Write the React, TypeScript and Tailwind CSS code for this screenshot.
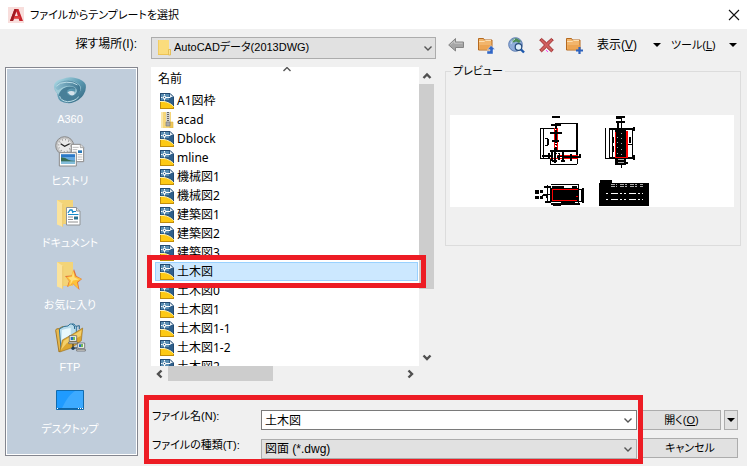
import type { ReactNode } from 'react'

const uiFont = "font-['Liberation_Sans','Noto_Sans_CJK_JP',sans-serif]"
const listFont = "font-['Noto_Sans','Noto_Sans_CJK_JP',sans-serif]"

type FileItem = { name: string; kind: 'dwg' | 'zip' }

const files: FileItem[] = [
  { name: 'A1図枠', kind: 'dwg' },
  { name: 'acad', kind: 'zip' },
  { name: 'Dblock', kind: 'dwg' },
  { name: 'mline', kind: 'dwg' },
  { name: '機械図1', kind: 'dwg' },
  { name: '機械図2', kind: 'dwg' },
  { name: '建築図1', kind: 'dwg' },
  { name: '建築図2', kind: 'dwg' },
  { name: '建築図3', kind: 'dwg' },
  { name: '土木図', kind: 'dwg' },
  { name: '土木図0', kind: 'dwg' },
  { name: '土木図1', kind: 'dwg' },
  { name: '土木図1-1', kind: 'dwg' },
  { name: '土木図1-2', kind: 'dwg' },
  { name: '土木図2', kind: 'dwg' },
]

function AppLogo() {
  return (
    <svg width="16" height="16" viewBox="0 0 16 16" aria-hidden="true">
      <rect width="16" height="16" fill="#f8dedc" />
      <path d="M2 14 6.500 2h4L15 14h-3.600l-.8-2.600H6.200L5 14z" fill="#c8232c" />
      <path d="M6.800 9h3L8.500 4.600z" fill="#f8dedc" />
      <path d="M2 14 6.500 2h2L5 14z" fill="#9e1b22" />
      <path d="m5.500 11.400 1-2.200 5 0 .8 2.200z" fill="#e0413f" />
    </svg>
  )
}

function Chevron({ dir, bold = false }: { dir: 'up' | 'down' | 'left' | 'right'; bold?: boolean }) {
  const d = {
    up: 'M1.500 7 5 3.500 8.500 7',
    down: 'M1.500 3.500 5 7l3.500-3.500',
    left: 'M6.500 1.500 3 5l3.500 3.500',
    right: 'M3.500 1.500 7 5 3.500 8.500',
  }[dir]
  return (
    <svg width="10" height="10" viewBox="0 0 10 10" fill="none" stroke={bold ? '#505050' : '#555'} strokeWidth={bold ? 2.4 : 1.4} aria-hidden="true">
      <path d={d} />
    </svg>
  )
}

function Triangle() {
  return (
    <svg width="8" height="4" viewBox="0 0 8 4" aria-hidden="true">
      <path d="M0 0h8L4 4z" fill="#000" />
    </svg>
  )
}

function FolderBack() {
  return (
    <>
      <path d="M0 0h16v24H0z" fill="#efcb68" />
      <path d="M0 0h16v22L6 24z" fill="#f3d478" />
      <path d="M0 0 6 4v23L0 24.500z" fill="#fbe39c" />
      <path d="M5.500 4v23l.6-.4V4.300z" fill="#e3b951" />
    </>
  )
}

function DwgIcon() {
  return (
    <svg width="14" height="16" viewBox="0 0 14 16" aria-hidden="true">
      <path d="M0 0h10l4 4v12H0z" fill="#2f5f8b" />
      <path d="M1 1h8v6H1z" fill="#5b8fb4" />
      <path d="M10 0 14 4h-4z" fill="#e9f0f5" />
      <path d="M1 8c6-1 10 1 13 5v1L1 11z" fill="#244f79" />
      <path d="M0 8.500h4c4 .5 7 2.500 10 5V16H0z" fill="#fdc914" />
      <path d="M0 8.500h4c4 .5 7 2.500 10 5" stroke="#fff3b8" fill="none" />
      <path d="M0 15.500h14M.5 9v7M13.500 14v2" stroke="#c08c0a" />
      <path d="M4.500 1v1.500M4.500 6v1.500M1 4.500h1.500M6 4.500h4.500" stroke="#fff" />
      <path d="M3.500 3.500h2v2h-2z" fill="#2f5f8b" stroke="#fff" strokeWidth=".9" />
      <path d="M.5 8V.5H10l3.500 3.500v9" stroke="#234a70" fill="none" />
    </svg>
  )
}

function ZipIcon() {
  return (
    <svg width="14" height="16" viewBox="0 0 14 16" aria-hidden="true">
      <path d="M1 0h10v11h2v5H1z" fill="#f5d67b" />
      <path d="M1 0h2v16H1z" fill="#fbe7a8" />
      <path d="M10 10h3v6h-3z" fill="#f0c859" stroke="#dcb140" strokeWidth=".6" />
      <path d="M6 0h4v12H6z" fill="#d4d4ce" />
      <path d="M8 0v11" stroke="#666" strokeWidth="2" strokeDasharray="1 1" />
      <path d="M6 10h4v4H6z" fill="#aaa" stroke="#777" strokeWidth=".6" />
    </svg>
  )
}

function SmallFolder() {
  return (
    <svg width="13" height="16" viewBox="0 0 13 16" aria-hidden="true">
      <path d="M0 0h11v9h2v6H0z" fill="#fbdc7c" />
      <path d="M0 0h1v15H0z" fill="#f3cd62" />
      <path d="M10.500 9.500h2v5.500h-2z" fill="#fbe294" stroke="#dfb64d" strokeWidth=".8" />
      <path d="M0 14.500h10" stroke="#eec455" />
    </svg>
  )
}

function A360Icon() {
  return (
    <svg width="32" height="27" viewBox="165 47 97 80" aria-hidden="true">
      <defs>
        <linearGradient id="swirlA" x1="0" y1="0" x2="1" y2="1">
          <stop offset="0" stopColor="#b9e3ec" />
          <stop offset=".5" stopColor="#5c9ab2" />
          <stop offset="1" stopColor="#2d5f79" />
        </linearGradient>
        <linearGradient id="swirlB" x1="0" y1="0" x2="1" y2="0">
          <stop offset="0" stopColor="#8fc0d2" />
          <stop offset="1" stopColor="#3c7590" />
        </linearGradient>
      </defs>
      <path d="M190 52q20-8 40-3 24 5 31 20 3 18-7 32-10 16-36 24-22 2-34-6-6-5-8-14l-2-10q-12-10-8-28 6-12 24-15z" fill="url(#swirlA)" />
      <path d="M188 62q28-10 48 2 14 10 10 22-6 12-26 15l8-8q6-10-6-14-14-5-28 2-12 8-16 18-14-12-8-24 5-9 18-13z" fill="#9fcbd8" />
      <path d="M186 60q30-9 48 4 18 13 8 28-8 12-28 14 18-6 20-16 2-14-18-17-20-1-36 12-8 2-11-6 3-13 17-19z" fill="url(#swirlB)" />
      <path d="M179 105q2-22 26-29 20-4 28 9-16-9-27 1-6 9 4 16 12 5 26-3-10 18-32 20-17 0-25-14z" fill="#487f98" />
      <path d="M206 92q10-6 22-1l-2 9q-6 4-13 0z" fill="#d6e3eb" />
      <path d="M182 104q3 14 24 17 22-1 34-15M172 74q10-12 30-12 22-1 34 8" fill="none" stroke="#bcdde7" strokeWidth="3" />
    </svg>
  )
}

function HistoryIcon() {
  return (
    <svg width="30" height="32" viewBox="168 227 90 96" aria-hidden="true">
      <circle cx="197" cy="256" r="27" fill="#c4c4c4" stroke="#8b8b8b" strokeWidth="3" />
      <circle cx="197" cy="256" r="21" fill="#e9e9e9" />
      <circle cx="197" cy="256" r="18" fill="none" stroke="#777" strokeWidth="4" strokeDasharray="2 7.400" />
      <path d="m185 250 12 8 15-8" fill="none" stroke="#222" strokeWidth="3.500" />
      <path d="M217 252h28l9 9v43h-37z" fill="#fff" stroke="#8a8a8a" strokeWidth="3" />
      <path d="M244 252v10h10" fill="#ddd" stroke="#8a8a8a" strokeWidth="2" />
      <path d="M221 261h18M221 268h14M221 275h12M236 283h14M236 290h14M236 297h14" stroke="#999" strokeWidth="2" />
      <path d="M237 270h12v8h-12z" fill="#2878b8" />
      <path d="M181 277h51v40h-51z" fill="#fff" stroke="#8a8a8a" strokeWidth="3" />
      <path d="M186 282h42v29h-42z" fill="#67a9df" />
      <path d="M186 282h42v8h-42z" fill="#2c79c8" />
      <path d="M186 291q14 1 22 7 10 4 20 3v5h-42z" fill="#386d55" />
      <path d="M186 303h42v8h-42z" fill="#83bdda" />
    </svg>
  )
}

function DocumentIcon() {
  return (
    <svg width="26" height="28" viewBox="0 0 26 28" aria-hidden="true">
      <FolderBack />
      <path d="M9.500 7.500h10l3.500 3.500v14H9.500z" fill="#fff" stroke="#8f9396" />
      <path d="M19.500 7.500V11H23" fill="#ddd" stroke="#8f9396" />
      <path d="m11 13 2-3h2l1 3" stroke="#168ac9" fill="none" strokeWidth="1.300" />
      <path d="M16 11.500h3M11 14.500h10.500" stroke="#168ac9" />
      <path d="M11 17h5M11 19.500h5M11 22h10" stroke="#909090" />
      <path d="M17 16.500h4v3h-4z" fill="#2b718e" />
    </svg>
  )
}

function FavoriteIcon() {
  return (
    <svg width="26" height="28" viewBox="0 0 26 28" aria-hidden="true">
      <FolderBack />
      <path d="m17 7 2.500 7 5.500 3-4 3.500L22.500 28 16 22l-6 3 2-6-4-5 6.500-.5z" fill="#e0713b" />
      <path d="m16 8 2.500 6.500 6 2.500-4.500 3 1.500 7L16 21.500 11 25l1.500-6L9 15l5.500-1z" fill="#fdc23a" />
      <path d="m16 9 1.500 6.500 4.500 2-6 1-3 4.500 1-4.500-3-3 4-.5z" fill="#ffe07c" />
    </svg>
  )
}

function FtpIcon() {
  return (
    <svg width="31" height="30" viewBox="167 17 93 90" aria-hidden="true">
      <path d="M169 39q0-6 10-5l10-6 10-1 3 55-23 22z" fill="#e8b94c" stroke="#a77a28" strokeWidth="3" />
      <path d="M180 35q14-10 26-9l6-6h12l7 9v40l-46 26z" fill="#b9dcec" stroke="#34789e" strokeWidth="3" />
      <path d="M188 38q12-5 26-6v28l-29 28z" fill="#e8f8fd" />
      <path d="M218 20q10 4 8 15M230 27l10-2v10" fill="none" stroke="#28658c" strokeWidth="3" />
      <path d="m181 104 8-36 32-18 29-18-4 38-30 22z" fill="#dda730" stroke="#9b7427" strokeWidth="2" />
      <path d="m185 98 8-28 54-32-3 18-42 22z" fill="#f3d06c" />
      <path d="M210 55h22v17h-22zM235 77h21v16h-21z" fill="#f1f3ed" stroke="#555" strokeWidth="2" />
      <path d="M214 59h13v9h-13zM239 81h12v8h-12z" fill="#286fc0" />
      <path d="M221 59h6v9h-6zM245 81h6v8h-6z" fill="#72bd52" />
      <path d="M208 74h26v5h-26zM232 96h26v5h-26z" fill="#e1e2dd" stroke="#555" strokeWidth="2" />
      <path d="M221 80v12h12" fill="none" stroke="#222" strokeWidth="3" />
      <circle cx="221" cy="93" r="5" fill="#1f3e59" />
    </svg>
  )
}

function DesktopIcon() {
  return (
    <svg width="28" height="20" viewBox="0 0 28 20" aria-hidden="true">
      <path d="M.5.5h27v19H.5z" fill="#1f9bff" stroke="#126bad" />
      <path d="M19 1h8v17H6C10 10 13 5 19 1z" fill="#3daaff" />
      <path d="M1 18.500h26" stroke="#0e65a6" />
      <path d="M1 18.500h1M22 18.500h1m1 0h1m1 0h1" stroke="#fff" />
    </svg>
  )
}

const places: { label: string; icon: ReactNode }[] = [
  { label: 'A360', icon: <A360Icon /> },
  { label: 'ヒストリ', icon: <HistoryIcon /> },
  { label: 'ドキュメント', icon: <DocumentIcon /> },
  { label: 'お気に入り', icon: <FavoriteIcon /> },
  { label: 'FTP', icon: <FtpIcon /> },
  { label: 'デスクトップ', icon: <DesktopIcon /> },
]

function OrangeFolder({ children }: { children: ReactNode }) {
  return (
    <svg width="17" height="17" viewBox="0 0 17 17" aria-hidden="true">
      <path d="M.5 1.500h5l1 1.500h7.500v10H.5z" fill="#f2b56b" stroke="#b5691f" />
      <path d="M1 4.500h5l1.500-1H13" fill="none" stroke="#fbe0b4" />
      <path d="M1.500 8h12v4.500h-12z" fill="#eda552" />
      {children}
    </svg>
  )
}

function Toolbar() {
  return (
    <div className="flex h-[30px] items-center pl-[3px] pt-[2px]">
      <button aria-label="戻る" className="mr-[14px]">
        <svg width="16" height="16" viewBox="0 0 16 16" aria-hidden="true">
          <path d="M.7 8 7.500 1.500V5h8v5.500h-8V14z" fill="#a6a6a6" stroke="#858585" />
          <path d="M2.500 7.500 6.500 4v2.200h8" fill="none" stroke="#c9c9c9" />
        </svg>
      </button>
      <button aria-label="1 つ上のフォルダへ" className="mr-[13px]">
        <OrangeFolder>
          <path d="M13 8.500 9.500 12.500H12v1.500H9V17h6v-4.500h2z" fill="#3166c5" stroke="#fff" strokeWidth=".4" />
        </OrangeFolder>
      </button>
      <button aria-label="Web を検索" className="mr-[14px]">
        <svg width="17" height="17" viewBox="0 0 17 17" aria-hidden="true">
          <circle cx="7.500" cy="7.500" r="6.800" fill="#8facd8" stroke="#5f7eb2" />
          <path d="M4 3q3-2.500 5-1.500l4 2.500-2 2-3-1.500-2 1-2-.5z" fill="#4d8d55" />
          <path d="M3 7q1-4 4-5" stroke="#c6def1" fill="none" />
          <circle cx="10.500" cy="10" r="3.300" fill="#dcedf9" stroke="#264b7c" strokeWidth="1.200" />
          <path d="m13 12.500 3 3" stroke="#1c58ac" strokeWidth="2.400" />
        </svg>
      </button>
      <button aria-label="削除" className="mr-[12px]">
        <svg width="15" height="16" viewBox="0 0 15 16" aria-hidden="true">
          <path d="m2.700 1.500 4.800 4.300L12.300 1.500l2 1.500-4.800 5 4.800 5-2 1.800-4.800-4.500-4.800 4.500-2-1.800 4.800-5L.7 3z" fill="#d0605e" stroke="#a02f31" />
          <path d="M7 13.500h1m0 1h1" stroke="#ff42ff" />
        </svg>
      </button>
      <button aria-label="新規フォルダを作成" className="mr-[14px]">
        <OrangeFolder>
          <path d="M13.500 10v7M10 13.500h7" stroke="#2d62bd" strokeWidth="2.200" />
        </OrangeFolder>
      </button>
      <button className="flex w-[74px] items-center justify-between pr-[10px]">
        <span>表示(<u>V</u>)</span>
        <Triangle />
      </button>
      <button className="flex w-[66px] items-center justify-between">
        <span className="text-[11px]">ツール(<u>L</u>)</span>
        <Triangle />
      </button>
    </div>
  )
}

function DrawingPreview() {
  return (
    <svg className="h-[92px] w-full bg-white" viewBox="0 0 284 92" role="img" aria-label="図面のプレビュー">
      <g transform="translate(70 -5) scale(.33333)" fill="none" stroke="#000" strokeWidth="3" shapeRendering="crispEdges">
        <path d="M96 18h24v6H96z" fill="#000" stroke="none" />
        <path d="M61.500 55.500h40M61.500 55v91h28M70.500 54v90M106 40.500h66M91.500 145v18.500h80v-24M76 86h9v20H76M82 84v22" />
        <path d="M171 40v104" strokeWidth="5" />
        <path d="M104 53v71M112 53v71" stroke="#f00" strokeWidth="5" />
        <path d="M84 145h90M112 137h62" stroke="#f00" strokeWidth="4" />
        <path d="M107 38v94" strokeWidth="6" strokeDasharray="18 4 10 3" />
        <path d="M93 46h30M89 68h36M96 94h22M90 123h84M66 137h32M112 141h70" strokeWidth="6" />
        <path d="M86 128v18M96 124v28M104 115v43M116 130v20M128 124v32M153 132v22M180 132v12M95 154h15M122 154h12" strokeWidth="6" />
        <path d="M105 102h6M105 111h6M110 134h6M119 143h6" stroke="#fff" />
        <path d="M288 18h26v6H302v3h-14zM288 33h27v6h-27z" fill="#000" stroke="none" />
        <path d="M304.500 20v154M256.500 54v91.500h30M268.500 56v90M278 59v84M339 60v80M325 104h14" />
        <path d="M268 57h76M267 144h76M282 82q-8 7 0 14M282 111q-8 7 0 14M331 82v18M342 50v14M342 136v14M284 160h40M294 36v20" strokeWidth="6" />
        <path d="M286 60h33v104h-33z" fill="#000" stroke="none" />
        <path d="M287 66v78M285 143h38" stroke="#f00" />
        <path d="M321 64v76" stroke="#f00" strokeWidth="6" />
        <path d="M304 68v76M294 80v64" stroke="#fff" strokeWidth="2" strokeDasharray="3 13" />
        <path d="M295 150h16M295 157h16" stroke="#fff" strokeWidth="2" />
        <path d="M45 240h12v11H45zM45 259h12v9H45zM60 240h8v8h-8zM60 258h8v8h-8z" fill="#000" stroke="none" />
        <path d="M92 223.500h85v61H92M75 231h18v46H78M82 226v53M65 257h13M178 238h13v36h-17M185 238v36M69 254h24" />
        <path d="M95 235h82v40H95z" fill="#000" />
        <path d="M97 239h76M97 237v36M97 271h75M168 260h6" stroke="#f00" />
        <path d="M95 231h38M157 231h15M92 281h32M100 286h22M124 278h40M166 282h13M81 252v12M189 235v44M72 230h18M76 276h16" strokeWidth="6" />
        <path d="M240 210h36v9h111v69H237v-69h3z" fill="#000" stroke="none" />
        <path d="M272 223h98M272 229h98" stroke="#fff" strokeWidth="2" strokeDasharray="12 3 5 9" />
        <path d="M258 250h112M258 268h112" stroke="#fff" strokeDasharray="7 9 20 7 4 7" />
      </g>
    </svg>
  )
}

function FileBrowser() {
  return (
    <div className="relative w-[283px]">
      <div className={`grid grid-cols-[1fr_15px] grid-rows-[299px_15px] ${listFont}`}>
        <div className="relative overflow-hidden bg-white pl-1 pr-px">
          <div className="flex h-6 items-center pl-[3px]">名前</div>
          <div className="absolute left-[131px] top-[-3px]"><Chevron dir="up" /></div>
          <ul>
            {files.map((f) => (
              <li key={f.name}>
                <button
                  className={`flex h-[19px] w-full items-center gap-[3px] border pl-1 text-left ${
                    f.name === '土木図' ? 'border-[#99d1ff] bg-[#cce8ff]' : 'border-transparent'
                  }`}
                >
                  {f.kind === 'dwg' ? <DwgIcon /> : <ZipIcon />}
                  {f.name}
                </button>
              </li>
            ))}
          </ul>
        </div>
        <div className="flex flex-col">
          <button aria-label="上へスクロール" className="flex h-[17px] items-center justify-center"><Chevron dir="up" bold /></button>
          <div className="h-[205px] bg-[#cdcdcd]" />
          <button aria-label="下へスクロール" className="mt-auto flex h-[18px] items-center justify-center"><Chevron dir="down" bold /></button>
        </div>
        <div className="flex">
          <button aria-label="左へスクロール" className="flex w-[17px] items-center justify-center"><Chevron dir="left" bold /></button>
          <div className="w-[105px] bg-[#cdcdcd]" />
          <button aria-label="右へスクロール" className="ml-auto flex w-[18px] items-center justify-center"><Chevron dir="right" bold /></button>
        </div>
      </div>
      <div className="pointer-events-none absolute left-[-4px] top-[188px] h-[33px] w-[279px] border-[5px] border-[#ed1c24]" />
    </div>
  )
}

export default function App() {
  return (
    <div className={`bg-[#f0f0f0] text-[12px] leading-4 text-black [font-feature-settings:'palt'] ${uiFont}`}>
      <header className="flex h-[29px] items-center bg-white pl-2 pr-[7px]">
        <AppLogo />
        <h1 className="ml-[6px] text-[11px]">ファイルからテンプレートを選択</h1>
        <button aria-label="閉じる" className="ml-auto">
          <svg width="12" height="12" viewBox="0 0 12 12" aria-hidden="true">
            <path d="m1 1 10 10M11 1 1 11" stroke="#111" strokeWidth="1.100" />
          </svg>
        </button>
      </header>

      <main className="flex pb-[10px] pl-[5px]">
        <div className="flex w-[133px] flex-col pb-[3px]">
          <label htmlFor="look-in" className="flex h-[38px] items-start justify-end pr-px pt-[7px]">探す場所(I):</label>
          <nav className="flex-1 border border-[#84868f] bg-white p-px">
            <ul className="h-full bg-[#c0cddb] pr-[3px] pt-1">
              {places.map((p) => (
                <li key={p.label}>
                  <button className="flex h-[62px] w-full flex-col items-center gap-1 text-[11px] text-white">
                    <span className="flex h-[34px] items-center">{p.icon}</span>
                    {p.label}
                  </button>
                </li>
              ))}
            </ul>
          </nav>
        </div>

        <div className="ml-[13px] flex flex-1 flex-col">
          <div className="flex">
            <div className="w-[285px] pt-2">
              <div className="relative mb-2 h-[22px]">
                <select id="look-in" className="h-full w-full appearance-none border border-[#acacac] bg-[#e1e1e1] pb-[3px] pl-[22px] text-[11px]">
                  <option>AutoCADデータ(2013DWG)</option>
                </select>
                <span className="pointer-events-none absolute left-[7px] top-[3px]"><SmallFolder /></span>
                <span className="pointer-events-none absolute right-[3px] top-[6px]"><Chevron dir="down" /></span>
              </div>
              <FileBrowser />
            </div>
            <div className="flex-1 pl-[9px] pr-[6px]">
              <Toolbar />
              <fieldset className="mt-1 h-[183px] border border-[#dcdcdc] pl-1 pr-[6px]">
                <legend className="ml-px px-[2px] text-[11px]">プレビュー</legend>
                <div className="mt-9 flex"><DrawingPreview /></div>
              </fieldset>
            </div>
          </div>

          <form className="relative mt-[29px] flex pr-[9px]" onSubmit={(e) => e.preventDefault()}>
            <div className="grid flex-1 grid-cols-[110px_1fr] gap-y-[9px]">
              <label htmlFor="file-name" className="-mt-[2px] pl-px text-[11px]">ファイル名(N):</label>
              <div className="relative h-5">
                <input id="file-name" defaultValue="土木図" className="h-full w-full border border-[#7a7a7a] bg-white pb-[2px] pl-[3px]" />
                <button type="button" aria-label="ファイル名の履歴" className="absolute right-1 top-[5px]"><Chevron dir="down" /></button>
              </div>
              <label htmlFor="file-type" className="-mt-[2px] pl-px text-[11px]">ファイルの種類(T):</label>
              <div className="relative h-5">
                <select id="file-type" className="h-full w-full appearance-none border border-[#acacac] bg-[#e1e1e1] pl-[3px]">
                  <option>図面 (*.dwg)</option>
                </select>
                <span className="pointer-events-none absolute right-1 top-[5px]"><Chevron dir="down" /></span>
              </div>
            </div>
            <div className="ml-[5px] flex w-24 flex-col gap-2">
              <div className="flex h-5 gap-[3px]">
                <button type="submit" className="flex flex-1 items-center justify-center border border-[#acacac] bg-[#e1e1e1] text-[11px]">
                  <span>開く(<u>O</u>)</span>
                </button>
                <button type="button" aria-label="開くオプション" className="flex w-[14px] items-center justify-center border border-[#acacac] bg-[#e1e1e1]">
                  <Triangle />
                </button>
              </div>
              <button type="button" className="flex h-5 items-center justify-center border border-[#acacac] bg-[#e1e1e1] text-[11px]">キャンセル</button>
            </div>
            <div className="pointer-events-none absolute bottom-[-5px] left-[-7px] right-[104px] top-[-15px] border-[5px] border-[#ed1c24]" />
          </form>
        </div>
      </main>
    </div>
  )
}
